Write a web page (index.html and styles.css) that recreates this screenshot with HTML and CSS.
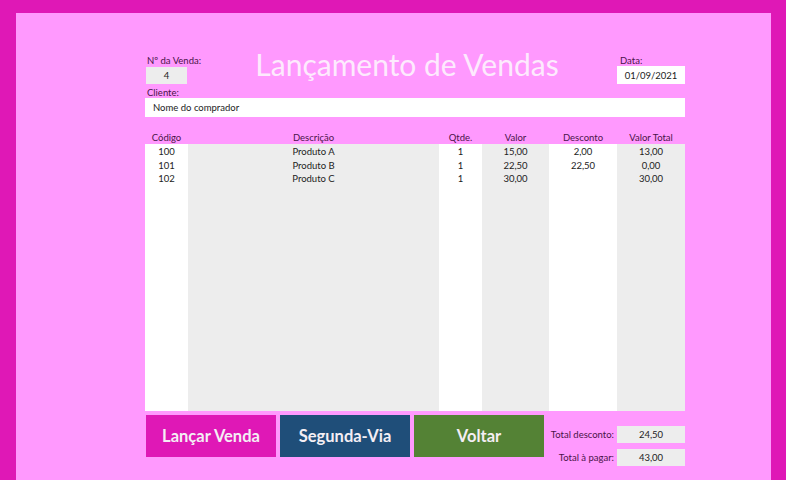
FILE: index.html
```html
<!DOCTYPE html>
<html lang="pt">
<head>
<meta charset="utf-8">
<title>Lançamento de Vendas</title>
<link rel="stylesheet" href="styles.css">
</head>
<body>
<div class="frame">
  <div class="sheet">
    <div class="head">
      <div class="field-num">
        <div class="label">Nº da Venda:</div>
        <div class="box grey num">4</div>
      </div>
      <h1 class="title">Lançamento de Vendas</h1>
      <div class="field-date">
        <div class="label">Data:</div>
        <div class="box white date">01/09/2021</div>
      </div>
    </div>
    <div class="label client-label">Cliente:</div>
    <div class="box white client">Nome do comprador</div>

    <div class="table">
      <div class="col c1"><div class="th">Código</div><div class="td"><div>100</div><div>101</div><div>102</div></div></div>
      <div class="col c2"><div class="th">Descrição</div><div class="td"><div>Produto A</div><div>Produto B</div><div>Produto C</div></div></div>
      <div class="col c3"><div class="th">Qtde.</div><div class="td"><div>1</div><div>1</div><div>1</div></div></div>
      <div class="col c4"><div class="th">Valor</div><div class="td"><div>15,00</div><div>22,50</div><div>30,00</div></div></div>
      <div class="col c5"><div class="th">Desconto</div><div class="td"><div>2,00</div><div>22,50</div><div></div></div></div>
      <div class="col c6"><div class="th">Valor Total</div><div class="td"><div>13,00</div><div>0,00</div><div>30,00</div></div></div>
    </div>

    <div class="foot">
      <button class="btn magenta">Lançar Venda</button>
      <button class="btn blue">Segunda-Via</button>
      <button class="btn green">Voltar</button>
      <div class="totals">
        <div class="trow"><span class="label tl">Total desconto:</span><span class="box grey tv">24,50</span></div>
        <div class="trow"><span class="label tl">Total à pagar:</span><span class="box grey tv">43,00</span></div>
      </div>
    </div>
  </div>
</div>
</body>
</html>
```
FILE: styles.css
```css
* { box-sizing: border-box; }
html, body { margin: 0; padding: 0; }
body {
  background: #df18b6;
  font-family: "Lato", "Open Sans", sans-serif;
  font-size: 9.5px;
  color: #222;
  height: 480px;
  overflow: hidden;
}
.frame {
  margin: 13px 15px 0 16px;
  background: #ff99fe;
  height: 480px;
  padding: 42px 0 0 129px;
}
.sheet { width: 540px; }
.label { color: #4a1448; line-height: 11px; }
.box { display: flex; align-items: center; justify-content: center; }
.grey { background: #ededed; }
.white { background: #fff; }
.head { display: flex; align-items: flex-start; height: 32px; }
.field-num { width: 60px; padding-left: 2px; }
.num { width: 41px; height: 17px; margin-top: 1px; margin-left: -1px; }
.title {
  flex: 1;
  margin: -9px 0 0 0;
  padding-right: 8px;
  text-align: center;
  color: #fdeafd;
  font-weight: 400;
  font-size: 30px;
  line-height: 36px;
  white-space: nowrap;
}
.field-date { width: 68px; }
.field-date .label { padding-left: 3px; }
.date { height: 18px; }
.client-label { margin-left: 2px; }
.client { height: 19px; justify-content: flex-start; padding-left: 8px; }

.table { display: flex; margin-top: 14px; height: 280px; }
.col { display: flex; flex-direction: column; text-align: center; }
.th { height: 13px; line-height: 14px; color: #4a1448; }
.td { flex: 1; padding-top: 1px; line-height: 13.5px; }
.c1 { width: 43px; } .c1 .td { background: #fff; }
.c2 { width: 251px; } .c2 .td { background: #ededed; }
.c3 { width: 43px; } .c3 .td { background: #fff; }
.c4 { width: 67px; } .c4 .td { background: #ededed; }
.c5 { width: 68px; } .c5 .td { background: #fff; }
.c6 { width: 68px; } .c6 .td { background: #ededed; }

.foot { display: flex; gap: 4px; margin-top: 4px; padding-left: 1px; }
.btn {
  width: 130px; height: 42px;
  border: 0; padding: 0;
  color: #f4eef4;
  font-family: "Lato", "Open Sans", sans-serif;
  font-weight: 700;
  font-size: 16.5px;
}
.magenta { background: #df18b6; }
.blue { background: #1f4e79; }
.green { background: #548235; }
.totals { flex: 1; display: flex; flex-direction: column; gap: 6px; padding-top: 11px; }
.trow { display: flex; align-items: center; justify-content: flex-end; gap: 3px; }
.tl { text-align: right; }
.tv { width: 68px; height: 17px; }
```
